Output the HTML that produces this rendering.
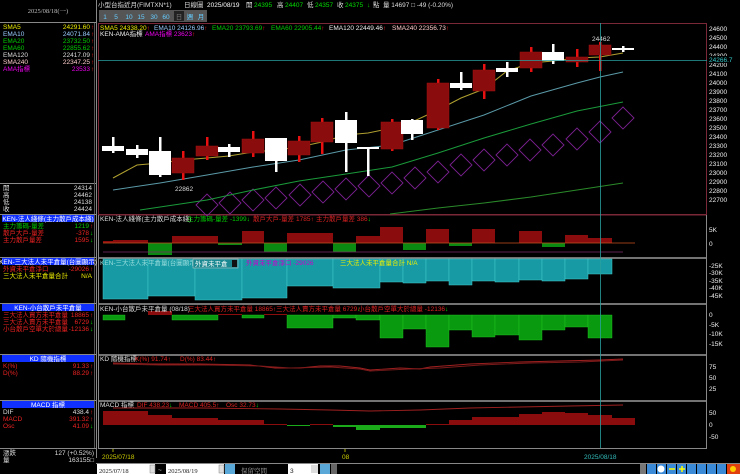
<!DOCTYPE html>
<html><head><meta charset="utf-8"><style>
html,body{margin:0;padding:0;background:#000;width:740px;height:474px;overflow:hidden}
svg{display:block}
text{font-family:"Liberation Sans","Noto Sans CJK TC",sans-serif;font-size:6.5px}
.s{font-family:"Liberation Serif","Noto Serif CJK SC",serif}
</style></head><body>
<svg width="740" height="474" viewBox="0 0 740 474" xmlns="http://www.w3.org/2000/svg">
<rect width="740" height="474" fill="#000"/>
<g stroke="#888" stroke-width="1" fill="none">
<line x1="96.5" y1="0" x2="96.5" y2="458"/>
<line x1="0" y1="22.5" x2="96" y2="22.5"/>
<line x1="0" y1="183.5" x2="96" y2="183.5"/>
<line x1="0" y1="448.5" x2="96" y2="448.5"/>
</g>
<line x1="94.5" y1="23" x2="94.5" y2="448" stroke="#555"/>
<text x="48" y="13" fill="#bbb" text-anchor="middle" class="s" font-size="5.5">2025/08/18(一)</text>
<g class="s" font-size="5.5">
<text x="3" y="29" fill="#ee0">SMA5</text><text x="90" y="29" fill="#ee0" text-anchor="end">24291.60</text>
<text x="3" y="36" fill="#9cf">EMA10</text><text x="90" y="36" fill="#9cf" text-anchor="end">24071.84</text>
<text x="3" y="43" fill="#0c0">EMA20</text><text x="90" y="43" fill="#0c0" text-anchor="end">23732.50</text>
<text x="3" y="50" fill="#0c0">EMA60</text><text x="90" y="50" fill="#0c0" text-anchor="end">22855.62</text>
<text x="3" y="57" fill="#ddd">EMA120</text><text x="90" y="57" fill="#ddd" text-anchor="end">22417.09</text>
<text x="3" y="64" fill="#fcc">SMA240</text><text x="90" y="64" fill="#fcc" text-anchor="end">22347.25</text>
<text x="3" y="71" fill="#e0e">AMA指標</text><text x="90" y="71" fill="#e0e" text-anchor="end">23533</text>
</g>
<g fill="#f22" font-size="5"><text x="91" y="29">↑</text><text x="91" y="36">↑</text><text x="91" y="43">↑</text><text x="91" y="50">↑</text><text x="91" y="57">↑</text><text x="91" y="64">↑</text><text x="91" y="71">↑</text></g>
<g class="s" font-size="5.5" fill="#ddd">
<text x="3" y="190">開</text><text x="92" y="190" text-anchor="end">24314</text>
<text x="3" y="197">高</text><text x="92" y="197" text-anchor="end">24462</text>
<text x="3" y="204">低</text><text x="92" y="204" text-anchor="end">24138</text>
<text x="3" y="211">收</text><text x="92" y="211" text-anchor="end">24424</text>
</g>
<g fill="#1030ff">
<rect x="2" y="215" width="92" height="7"/><rect x="2" y="258" width="92" height="7"/>
<rect x="2" y="304" width="92" height="7"/><rect x="2" y="355" width="92" height="7"/>
<rect x="2" y="401" width="92" height="7"/>
</g>
<g stroke="#888"><line x1="0" y1="214.5" x2="96" y2="214.5"/><line x1="0" y1="257.5" x2="96" y2="257.5"/><line x1="0" y1="303.5" x2="96" y2="303.5"/><line x1="0" y1="354.5" x2="96" y2="354.5"/><line x1="0" y1="400.5" x2="96" y2="400.5"/></g>
<g class="s" font-size="5" fill="#fff" text-anchor="middle">
<text x="48" y="221">KEN-法人綫條(主力散戶成本綫)</text>
<text x="48" y="264">KEN-三大法人未平倉量(台圖顯示)</text>
<text x="48" y="310">KEN-小台散戶未平倉量</text>
<text x="48" y="361">KD 隨機指標</text>
<text x="48" y="407">MACD 指標</text>
</g>
<g class="s" font-size="5">
<text x="3" y="228" fill="#0c0">主力籌碼-量差</text><text x="89" y="228" fill="#0c0" text-anchor="end">1219</text>
<text x="3" y="235" fill="#e22">散戶大戶-量差</text><text x="89" y="235" fill="#e22" text-anchor="end">-378</text>
<text x="3" y="242" fill="#e22">主力散戶量差</text><text x="89" y="242" fill="#e22" text-anchor="end">1595</text>
<text x="3" y="271" fill="#e22">外資未平倉淨口</text><text x="89" y="271" fill="#e22" text-anchor="end">-29026</text>
<text x="3" y="278" fill="#ee0">三大法人未平倉量合計</text><text x="92" y="278" fill="#ee0" text-anchor="end">N/A</text>
<text x="3" y="317" fill="#e22">三大法人買方未平倉量</text><text x="89" y="317" fill="#e22" text-anchor="end">18865</text>
<text x="3" y="324" fill="#e22">三大法人賣方未平倉量</text><text x="89" y="324" fill="#e22" text-anchor="end">6729</text>
<text x="3" y="331" fill="#e22">小台散戶空單大於總量</text><text x="89" y="331" fill="#e22" text-anchor="end">-12136</text>
<text x="3" y="368" fill="#e22">K(%)</text><text x="89" y="368" fill="#e22" text-anchor="end">91.33</text>
<text x="3" y="375" fill="#e22">D(%)</text><text x="89" y="375" fill="#e22" text-anchor="end">88.29</text>
<text x="3" y="414" fill="#ddd">DIF</text><text x="89" y="414" fill="#ddd" text-anchor="end">438.4</text>
<text x="3" y="421" fill="#e22">MACD</text><text x="89" y="421" fill="#e22" text-anchor="end">391.32</text>
<text x="3" y="428" fill="#e22">Osc</text><text x="89" y="428" fill="#e22" text-anchor="end">41.09</text>
<text x="3" y="455" fill="#ddd">漲跌</text><text x="94" y="455" fill="#ddd" text-anchor="end">127 (+0.52%)</text>
<text x="3" y="462" fill="#ddd">量</text><text x="94" y="462" fill="#ddd" text-anchor="end">163155□</text>
</g>
<g font-size="5"><text x="90" y="228" fill="#f22">↑</text><text x="90" y="235" fill="#0e0">↓</text><text x="90" y="242" fill="#0e0">↓</text><text x="90" y="271" fill="#f22">↑</text><text x="90" y="317" fill="#f22">↑</text><text x="90" y="324" fill="#0e0">↓</text><text x="90" y="331" fill="#0e0">↓</text><text x="90" y="368" fill="#f22">↑</text><text x="90" y="375" fill="#f22">↑</text><text x="90" y="414" fill="#f22">↑</text><text x="90" y="421" fill="#f22">↑</text><text x="90" y="428" fill="#0e0">↓</text></g>

<g font-size="6.5">
<text x="98" y="7" fill="#ddd">小型台指近月(FIMTXN*1)</text>
<text x="184" y="7" fill="#ddd">日線圖</text>
<text x="207" y="7" fill="#fff">2025/08/19</text>
<text x="246" y="7" fill="#ddd">開</text><text x="254" y="7" fill="#0d0">24395</text>
<text x="277" y="7" fill="#ddd">高</text><text x="285" y="7" fill="#0d0">24407</text>
<text x="307" y="7" fill="#ddd">低</text><text x="315" y="7" fill="#0d0">24357</text>
<text x="337" y="7" fill="#ddd">收</text><text x="345" y="7" fill="#0d0">24375</text>
<text x="367" y="7" fill="#0d0">↓</text><text x="373" y="7" fill="#ddd">點</text>
<text x="383" y="7" fill="#ddd">量 14697 □ -49 (-0.20%)</text>
</g>
<g font-size="6" text-anchor="middle">
<rect x="99" y="10" width="108" height="12" fill="#555"/>
<rect x="174" y="11" width="10" height="10" fill="#222"/>
<text x="105" y="19" fill="#6cf">1</text><text x="116" y="19" fill="#6cf">5</text><text x="129" y="19" fill="#6cf">10</text><text x="141" y="19" fill="#6cf">15</text><text x="154" y="19" fill="#6cf">30</text><text x="166" y="19" fill="#6cf">60</text><text x="179" y="19" fill="#777">日</text><text x="190" y="19" fill="#6cf">週</text><text x="201" y="19" fill="#6cf">月</text>
</g>

<rect x="98.5" y="23.5" width="608" height="191" fill="none" stroke="#7a2838"/>
<g stroke="#999" stroke-width="1.5">
<line x1="98" y1="258" x2="707" y2="258"/><line x1="98" y1="304" x2="707" y2="304"/><line x1="98" y1="355" x2="707" y2="355"/><line x1="98" y1="401" x2="707" y2="401"/>
</g>
<line x1="98" y1="215" x2="707" y2="215" stroke="#7a2838"/>
<line x1="98.5" y1="215" x2="98.5" y2="448" stroke="#888"/>
<line x1="706.5" y1="215" x2="706.5" y2="448" stroke="#888"/>
<line x1="98" y1="448.5" x2="707" y2="448.5" stroke="#888"/>

<g font-size="5.5">
<text x="100" y="30" fill="#ee0">SMA5 24338.20<tspan fill="#f22">↑</tspan></text>
<text x="154" y="30" fill="#9cf">EMA10 24126.96<tspan fill="#f22">↑</tspan></text>
<text x="212" y="30" fill="#0c0">EMA20 23793.69<tspan fill="#f22">↑</tspan></text>
<text x="271" y="30" fill="#0c0">EMA60 22905.44<tspan fill="#f22">↑</tspan></text>
<text x="329" y="30" fill="#eee">EMA120 22449.46<tspan fill="#f22">↑</tspan></text>
<text x="392" y="30" fill="#fcc">SMA240 22356.73<tspan fill="#f22">↑</tspan></text>
<text x="100" y="36" fill="#eee">KEN-AMA指標</text>
<text x="145" y="36" fill="#e0e">AMA指標 23623<tspan fill="#f22">↑</tspan></text>
</g>

<g font-size="5.5" fill="#eee">
<text x="709" y="31">24600</text><text x="709" y="40">24500</text><text x="709" y="49">24400</text><text x="709" y="58">24300</text><text x="709" y="67">24200</text><text x="709" y="76">24100</text><text x="709" y="85">24000</text><text x="709" y="94">23900</text><text x="709" y="103">23800</text><text x="709" y="112">23700</text><text x="709" y="121">23600</text><text x="709" y="130">23500</text><text x="709" y="139">23400</text><text x="709" y="148">23300</text><text x="709" y="157">23200</text><text x="709" y="166">23100</text><text x="709" y="175">23000</text><text x="709" y="184">22900</text><text x="709" y="193">22800</text><text x="709" y="202">22700</text>
</g>
<rect x="708" y="56" width="30" height="7" fill="#000"/>
<text x="709" y="62" fill="#3cc" font-size="5.5">24266.7</text>

<g fill="none" stroke="#7a2090" stroke-width="0.9">
<path d="M196 205l11-11 11 11-11 11z M219 203l11-11 11 11-11 11z M242 200l11-11 11 11-11 11z M265 198l11-11 11 11-11 11z M289 195l11-11 11 11-11 11z M312 192l11-11 11 11-11 11z M335 189l11-11 11 11-11 11z M358 186l11-11 11 11-11 11z M381 183l11-11 11 11-11 11z M404 178l11-11 11 11-11 11z M427 172l11-11 11 11-11 11z M450 165l11-11 11 11-11 11z M473 160l11-11 11 11-11 11z M496 155l11-11 11 11-11 11z M519 150l11-11 11 11-11 11z M542 145l11-11 11 11-11 11z M566 139l11-11 11 11-11 11z M589 132l11-11 11 11-11 11z M612 118l11-11 11 11-11 11z"/>
</g>
<g fill="none" stroke-width="1">
<polyline stroke="#2a8a2a" points="390,214 438,208 484,203 531,197 577,190 623,183"/>
<polyline stroke="#1a9a3a" points="140,210 207,200 253,190 299,181 346,174 392,167 438,153 484,138 531,124 577,111 623,102"/>
<polyline stroke="#5a9aa8" points="113,190 160,183 207,175 253,167 299,160 346,150 392,145 438,130 484,115 531,96 577,83 600,77 623,72"/>
<polyline stroke="#b0a030" points="113,178 137,165 160,163 183,160 207,158 229,156 253,152 276,150 299,147 322,142 346,135 368,133 392,128 412,122 438,110 461,98 484,89 507,71 531,63 553,61 577,58 600,57 623,53"/>
</g>
<g fill="#e81010">
<rect x="182" y="151" width="2.5" height="29"/><rect x="206" y="137" width="2.5" height="23"/><rect x="252" y="131" width="2.5" height="26"/><rect x="298" y="136" width="2.5" height="26"/><rect x="321" y="118" width="2.5" height="36"/><rect x="391" y="119" width="2.5" height="32"/><rect x="437" y="79" width="2.5" height="51"/><rect x="483" y="64" width="2.5" height="35"/><rect x="530" y="47" width="2.5" height="25"/><rect x="576" y="49" width="2.5" height="18"/><rect x="599" y="42" width="2.5" height="29"/>
</g>
<g fill="#fff">
<rect x="112" y="137" width="2.5" height="16"/><rect x="136" y="145" width="2.5" height="13"/><rect x="159" y="137" width="2.5" height="40"/><rect x="228" y="144" width="2.5" height="13"/><rect x="275" y="138" width="2.5" height="34"/><rect x="345" y="112" width="2.5" height="60"/><rect x="367" y="148" width="2.5" height="28"/><rect x="411" y="119" width="2.5" height="21"/><rect x="460" y="72" width="2.5" height="18"/><rect x="506" y="62" width="2.5" height="15"/><rect x="552" y="44" width="2.5" height="20"/><rect x="622" y="46" width="2.5" height="6"/>
</g>
<g fill="#8a0c0c" stroke="#a01010" stroke-width="0.5">
<rect x="172" y="158" width="22" height="15"/><rect x="196" y="146" width="22" height="10"/><rect x="242" y="139" width="22" height="14"/><rect x="288" y="141" width="22" height="14"/><rect x="311" y="122" width="22" height="20"/><rect x="381" y="122" width="22" height="27"/><rect x="427" y="83" width="22" height="45"/><rect x="473" y="70" width="22" height="21"/><rect x="520" y="52" width="22" height="16"/><rect x="566" y="57" width="22" height="5"/><rect x="589" y="45" width="22" height="10"/>
</g>
<g fill="#fff">
<rect x="102" y="146" width="22" height="5"/><rect x="126" y="149" width="22" height="6"/><rect x="149" y="151" width="22" height="24"/><rect x="218" y="147" width="22" height="5"/><rect x="265" y="138" width="22" height="23"/><rect x="335" y="120" width="22" height="23"/><rect x="357" y="147" width="22" height="2"/><rect x="401" y="120" width="22" height="14"/><rect x="450" y="83" width="22" height="5"/><rect x="496" y="68" width="22" height="4"/><rect x="542" y="52" width="22" height="9"/><rect x="612" y="48" width="22" height="2"/>
</g>
<text x="175" y="191" fill="#ddd" font-size="6">22862</text>
<text x="592" y="41" fill="#ddd" font-size="6">24462</text>
<line x1="98" y1="60.5" x2="707" y2="60.5" stroke="#2aa0a0" stroke-width="0.8"/>

<g font-size="5.5">
<text x="100" y="221" fill="#ddd">KEN-法人綫條(主力散戶成本綫)</text>
<text x="187" y="221" fill="#0c0">主力籌碼-量差 -1399<tspan fill="#0e0">↓</tspan></text>
<text x="253" y="221" fill="#d22">散戶大戶-量差 1785<tspan fill="#f22">↑</tspan></text>
<text x="316" y="221" fill="#d22">主力散戶量差 386<tspan fill="#0e0">↓</tspan></text>
</g>
<g fill="#8a0c0c">
<rect x="103" y="241" width="10" height="2"/><rect x="113" y="240" width="35" height="3"/><rect x="172" y="236" width="46" height="7"/><rect x="242" y="231" width="22" height="12"/><rect x="287" y="233" width="46" height="10"/><rect x="356" y="236" width="24" height="7"/><rect x="380" y="227" width="23" height="16"/><rect x="426" y="229" width="23" height="14"/><rect x="472" y="229" width="23" height="14"/><rect x="519" y="231" width="23" height="12"/><rect x="565" y="235" width="23" height="8"/><rect x="588" y="238" width="24" height="5"/>
</g>
<g fill="#0a8a10">
<rect x="148" y="243" width="24" height="12"/><rect x="218" y="243" width="24" height="2"/><rect x="264" y="243" width="23" height="9"/><rect x="333" y="243" width="23" height="9"/><rect x="403" y="243" width="23" height="7"/><rect x="449" y="243" width="23" height="3"/><rect x="542" y="243" width="23" height="4"/>
</g>
<line x1="103" y1="243" x2="635" y2="243" stroke="#c85020" stroke-width="0.8"/>
<line x1="103" y1="252" x2="623" y2="252" stroke="#7a2a6a" stroke-width="0.8"/>
<g font-size="5.5" fill="#eee"><text x="709" y="232">5K</text><text x="709" y="246">0</text></g>

<g fill="#179aa4" stroke="#4cc" stroke-width="0.5">
<rect x="103" y="259" width="45" height="40"/><rect x="148" y="259" width="47" height="37"/><rect x="195" y="259" width="47" height="41"/><rect x="242" y="259" width="45" height="39"/><rect x="287" y="259" width="46" height="27"/><rect x="333" y="259" width="47" height="29"/><rect x="380" y="259" width="23" height="23"/><rect x="403" y="259" width="23" height="24"/><rect x="426" y="259" width="23" height="22"/><rect x="449" y="259" width="23" height="26"/><rect x="472" y="259" width="23" height="22"/><rect x="495" y="259" width="24" height="23"/><rect x="519" y="259" width="23" height="21"/><rect x="542" y="259" width="23" height="22"/><rect x="565" y="259" width="23" height="20"/><rect x="588" y="259" width="24" height="15"/>
</g>
<g font-size="5.5">
<text x="100" y="265" fill="#9dd">KEN-三大法人未平倉量(台圖顯示)</text>
<rect x="193" y="259" width="45" height="9" fill="#1a8890" stroke="#ccc" stroke-width="0.5"/>
<text x="195" y="266" fill="#fff">外資未平倉</text>
<rect x="232" y="260" width="5" height="7" fill="#111"/>
<text x="246" y="265" fill="#c0c">外資未平倉淨口 -29026</text>
<text x="340" y="265" fill="#ee0">三大法人未平倉量合計 N/A</text>
</g>
<g font-size="5.5" fill="#eee"><text x="709" y="268">-25K</text><text x="709" y="275">-30K</text><text x="709" y="283">-35K</text><text x="709" y="290">-40K</text><text x="709" y="298">-45K</text></g>

<g fill="#0a9a10" stroke="#2c2" stroke-width="0.4">
<rect x="103" y="315" width="22" height="5"/><rect x="172" y="315" width="46" height="5"/><rect x="242" y="315" width="22" height="3"/><rect x="287" y="315" width="46" height="13"/><rect x="333" y="315" width="23" height="3"/><rect x="356" y="315" width="24" height="5"/><rect x="380" y="315" width="23" height="23"/><rect x="403" y="315" width="23" height="14"/><rect x="426" y="315" width="23" height="32"/><rect x="449" y="315" width="23" height="15"/><rect x="472" y="315" width="23" height="22"/><rect x="495" y="315" width="24" height="20"/><rect x="519" y="315" width="23" height="25"/><rect x="542" y="315" width="23" height="15"/><rect x="565" y="315" width="23" height="12"/><rect x="588" y="315" width="24" height="23"/>
</g>
<g fill="#8a0c0c"><rect x="148" y="311" width="24" height="4"/><rect x="218" y="314" width="24" height="1"/><rect x="264" y="314" width="23" height="1"/></g>
<g font-size="5.5">
<text x="100" y="311" fill="#ddd">KEN-小台散戶未平倉量 (08/18)</text>
<text x="188" y="311" fill="#d22">三大法人買方未平倉量 18865<tspan fill="#f22">↑</tspan></text>
<text x="276" y="311" fill="#d22">三大法人賣方未平倉量 6729<tspan fill="#0e0">↓</tspan></text>
<text x="358" y="311" fill="#d22">小台散戶空單大於總量 -12136<tspan fill="#0e0">↓</tspan></text>
</g>
<g font-size="5.5" fill="#eee"><text x="709" y="317">0</text><text x="709" y="327">-5K</text><text x="709" y="336">-10K</text><text x="709" y="346">-15K</text></g>

<g font-size="5.5">
<text x="100" y="361" fill="#ddd">KD 隨機指標</text>
<text x="135" y="361" fill="#d22">K(%) 91.74<tspan fill="#f22">↑</tspan></text>
<text x="180" y="361" fill="#d22">D(%) 83.44<tspan fill="#f22">↑</tspan></text>
</g>
<g fill="none" stroke-width="0.9">
<polyline stroke="#a02020" points="113,363 150,364 200,364 250,365 275,368 300,368 320,366 340,366 360,368 370,370 400,368 420,369 430,367 470,364 520,362 560,361 600,360 623,359"/>
<polyline stroke="#7a1a1a" points="113,364 160,365 210,365 260,366 290,368 330,367 360,369 370,371 410,369 440,368 480,365 530,363 580,362 623,360"/>
</g>
<g font-size="5.5" fill="#eee"><text x="709" y="369">75</text><text x="709" y="380">50</text><text x="709" y="391">25</text></g>

<g font-size="5.5">
<text x="100" y="407" fill="#ddd">MACD 指標</text>
<text x="137" y="407" fill="#d22">DIF 438.23<tspan fill="#0e0">↓</tspan></text>
<text x="179" y="407" fill="#d22">MACD 405.5<tspan fill="#f22">↑</tspan></text>
<text x="226" y="407" fill="#d22">Osc 32.73<tspan fill="#0e0">↓</tspan></text>
</g>
<g fill="#8a0c0c">
<rect x="103" y="411" width="45" height="14"/><rect x="148" y="415" width="24" height="10"/><rect x="172" y="418" width="46" height="7"/><rect x="218" y="420" width="46" height="5"/><rect x="264" y="424" width="23" height="1"/><rect x="310" y="424" width="23" height="1"/><rect x="426" y="424" width="23" height="1"/><rect x="449" y="420" width="23" height="5"/><rect x="472" y="417" width="47" height="8"/><rect x="519" y="414" width="23" height="11"/><rect x="542" y="412" width="23" height="13"/><rect x="565" y="413" width="23" height="12"/><rect x="588" y="415" width="24" height="10"/><rect x="612" y="418" width="23" height="7"/>
</g>
<g fill="#1aaa1a"><rect x="287" y="425" width="23" height="1"/><rect x="333" y="425" width="23" height="2"/><rect x="356" y="425" width="24" height="5"/><rect x="380" y="425" width="46" height="3"/></g>
<polyline fill="none" stroke="#a02020" stroke-width="0.9" points="113,408 200,408 280,409 330,410 370,411 420,410 470,408 520,407 570,406 623,405"/>
<g font-size="5.5" fill="#eee"><text x="709" y="415">50</text><text x="709" y="427">0</text><text x="709" y="439">-50</text></g>

<line x1="600.5" y1="23" x2="600.5" y2="448" stroke="#2aa0a0" stroke-width="0.8"/>

<line x1="113" y1="449" x2="113" y2="452" stroke="#aa0"/>
<line x1="345" y1="449" x2="345" y2="452" stroke="#aa0"/>
<text x="102" y="459" fill="#cc0" font-size="6">2025/07/18</text>
<text x="342" y="459" fill="#cc0" font-size="6">08</text>
<text x="584" y="459" fill="#3bb" font-size="6">2025/08/18</text>

<line x1="96" y1="463.5" x2="740" y2="463.5" stroke="#888"/>
<rect x="97" y="464" width="58" height="10" fill="#fff"/>
<text x="99" y="473" fill="#222" font-size="9" class="s">2025/07/18</text>
<rect x="150" y="465" width="5" height="8" fill="#ddd" stroke="#888" stroke-width="0.5"/>
<text x="158" y="472" fill="#ccc" font-size="7">~</text>
<rect x="166" y="464" width="58" height="10" fill="#fff"/>
<text x="168" y="473" fill="#222" font-size="9" class="s">2025/08/19</text>
<rect x="219" y="465" width="5" height="8" fill="#ddd" stroke="#888" stroke-width="0.5"/>
<rect x="225" y="464" width="10" height="10" fill="#5aa8d8"/>
<text x="241" y="473" fill="#aaa" font-size="10" class="s">保留空間</text>
<rect x="288" y="464" width="30" height="10" fill="#fff"/>
<text x="290" y="473" fill="#222" font-size="9">3</text>
<rect x="311" y="465" width="7" height="8" fill="#ddd"/>
<rect x="320" y="464" width="10" height="10" fill="#5aa8d8"/>
<rect x="331" y="464" width="6" height="10" fill="#666"/>
<rect x="640" y="464" width="6" height="10" fill="#777"/>
<g fill="#3a8ad8"><rect x="647" y="464" width="9" height="10"/><rect x="657" y="464" width="9" height="10"/><rect x="667" y="464" width="9" height="10"/><rect x="677" y="464" width="9" height="10"/><rect x="687" y="464" width="9" height="10"/><rect x="697" y="464" width="9" height="10"/><rect x="707" y="464" width="9" height="10"/><rect x="717" y="464" width="9" height="10"/></g>
<rect x="727" y="464" width="13" height="10" fill="#e04010"/>
<circle cx="661" cy="469" r="3.5" fill="#fff"/>
<g stroke="#ff0" stroke-width="1.5"><line x1="669" y1="469" x2="675" y2="469"/><line x1="679" y1="469" x2="685" y2="469"/><line x1="682" y1="466" x2="682" y2="472"/></g>
<circle cx="733" cy="469" r="3" fill="#fc0"/>
</svg>
</body></html>
